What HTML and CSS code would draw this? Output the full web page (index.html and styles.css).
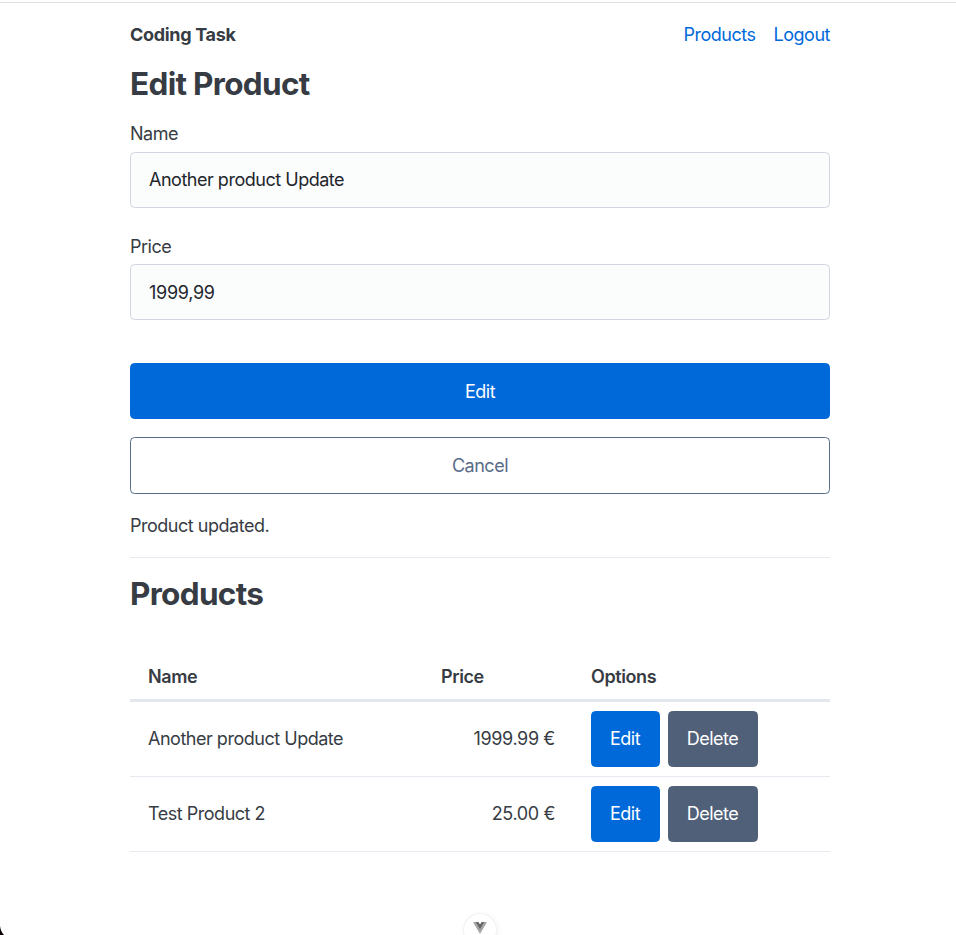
FILE: index.html
```html
<!DOCTYPE html>
<html lang="en">
<head>
<meta charset="utf-8">
<title>Coding Task</title>
<link rel="stylesheet" href="styles.css">
</head>
<body>
<div class="page">
  <nav class="nav">
    <strong class="brand">Coding Task</strong>
    <div class="links"><a href="#">Products</a><a href="#">Logout</a></div>
  </nav>
  <main>
    <h2 class="title-edit">Edit Product</h2>
    <form class="form">
      <label class="label" for="name">Name</label>
      <input class="input input-name" id="name" type="text" value="Another product Update">
      <label class="label label-price" for="price">Price</label>
      <input class="input input-price" id="price" type="text" value="1999,99">
      <button class="btn btn-submit" type="button">Edit</button>
      <button class="btn btn-cancel" type="button">Cancel</button>
    </form>
    <p class="status">Product updated.</p>
    <hr class="rule">
    <h2 class="title-list">Products</h2>
    <table class="table">
      <colgroup><col class="c-name"><col class="c-price"><col class="c-options"></colgroup>
      <thead><tr><th>Name</th><th>Price</th><th>Options</th></tr></thead>
      <tbody>
        <tr><td>Another product Update</td><td class="price">1999.99 €</td><td class="options"><div class="actions"><button class="btn btn-edit">Edit</button><button class="btn btn-delete">Delete</button></div></td></tr>
        <tr><td>Test Product 2</td><td class="price">25.00 €</td><td class="options"><div class="actions"><button class="btn btn-edit">Edit</button><button class="btn btn-delete">Delete</button></div></td></tr>
      </tbody>
    </table>
  </main>
</div>
<div class="devtools">
  <svg width="14" height="12" viewBox="0 0 14 12"><path d="M0 0H14L7 12Z" fill="#a6a6a6"/><path d="M2.8 0H11.2L7 7.2Z" fill="#666"/><path d="M5.4 0H8.6L7 2.6Z" fill="#fff"/></svg>
</div>
<svg class="corner" width="4" height="9" viewBox="0 0 4 9"><path d="M0 0Q.8 6 4 9H0Z" fill="#0b0003"/></svg>
</body>
</html>
```

FILE: styles.css
```css
*, *::before, *::after { box-sizing: border-box; }
html { height: 100%; overflow: hidden; }
body {
  margin: 0;
  height: 100%;
  overflow: hidden;
  position: relative;
  background: #fff;
  color: #373c44;
  font: 400 18px/27px Inter, "Liberation Sans", sans-serif;
  letter-spacing: -0.48px;
  border-top: 1px solid #fff;
}
.page { border-top: 1px solid #fff; }
.page::before { content: ""; display: block; height: 1px; background: #dedfe2; }
.nav, main { width: 700px; margin-left: 130px; }
.nav { display: flex; justify-content: space-between; padding-top: 18px; height: 59px; }
.brand { font-weight: 650; letter-spacing: -0.32px; }
.links { display: flex; gap: 18px; }
.links a { color: #0069d9; text-decoration: none; }
h2 { margin: 0; font-size: 31.5px; line-height: 40px; font-weight: 700; letter-spacing: -0.68px; }
.title-edit { padding-top: 2px; margin-bottom: 16px; }
.form { display: flex; flex-direction: column; }
.label { height: 32px; }
.label-price { padding-top: 1px; }
.input {
  height: 56px;
  margin-bottom: 24px;
  padding: 0 18px;
  border: 1px solid #cfd5e2;
  border-radius: 4.5px;
  background: #fbfcfc;
  color: #23262c;
  font: inherit;
  letter-spacing: inherit;
  outline: 0;
}
.input-name { padding-bottom: 2px; }
.input-price { letter-spacing: -0.3px; }
.btn {
  height: 56px;
  padding: 0;
  border: 1px solid #0069d9;
  border-radius: 4.5px;
  background: #0069d9;
  color: #fff;
  font: inherit;
  letter-spacing: inherit;
}
.btn-submit { margin: 19px 0 18px; }
.btn-cancel { height: 57px; border-color: #596b88; background: transparent; color: #596b88; }
.status { margin: 18px 0; }
.rule { margin: 0; border: 0; height: 1px; background: #e7eaf0; }
.title-list { margin-top: 16px; margin-bottom: 40px; }
.table { width: 100%; table-layout: fixed; border-collapse: separate; border-spacing: 0; }
.c-name { width: 293px; }
.c-price { width: 150px; }
th { height: 48px; padding: 0 18px; text-align: left; font-weight: 600; letter-spacing: -0.4px; border-bottom: 3px solid #e4e8ee; }
td { height: 75px; padding: 0 18px 2px; border-bottom: 1px solid #e7eaf0; }
.options { padding-bottom: 0; }
.price { text-align: right; letter-spacing: -0.38px; }
.actions { display: flex; gap: 8px; }
.actions .btn { padding: 0 1px 2px 0; }
.btn-edit { width: 69px; }
.btn-delete { width: 90px; background: #4f6078; border-color: #4f6078; }
.devtools {
  position: absolute;
  left: 464px;
  top: 913px;
  width: 32px;
  height: 32px;
  padding-top: 8px;
  border-radius: 50%;
  background: #fff;
  box-shadow: 0 0 0 1px #f2f2f2, 2px 2px 8px rgba(0,0,0,.06);
  display: flex;
  justify-content: center;
}
.corner { position: absolute; left: 0; bottom: 0; }
```
